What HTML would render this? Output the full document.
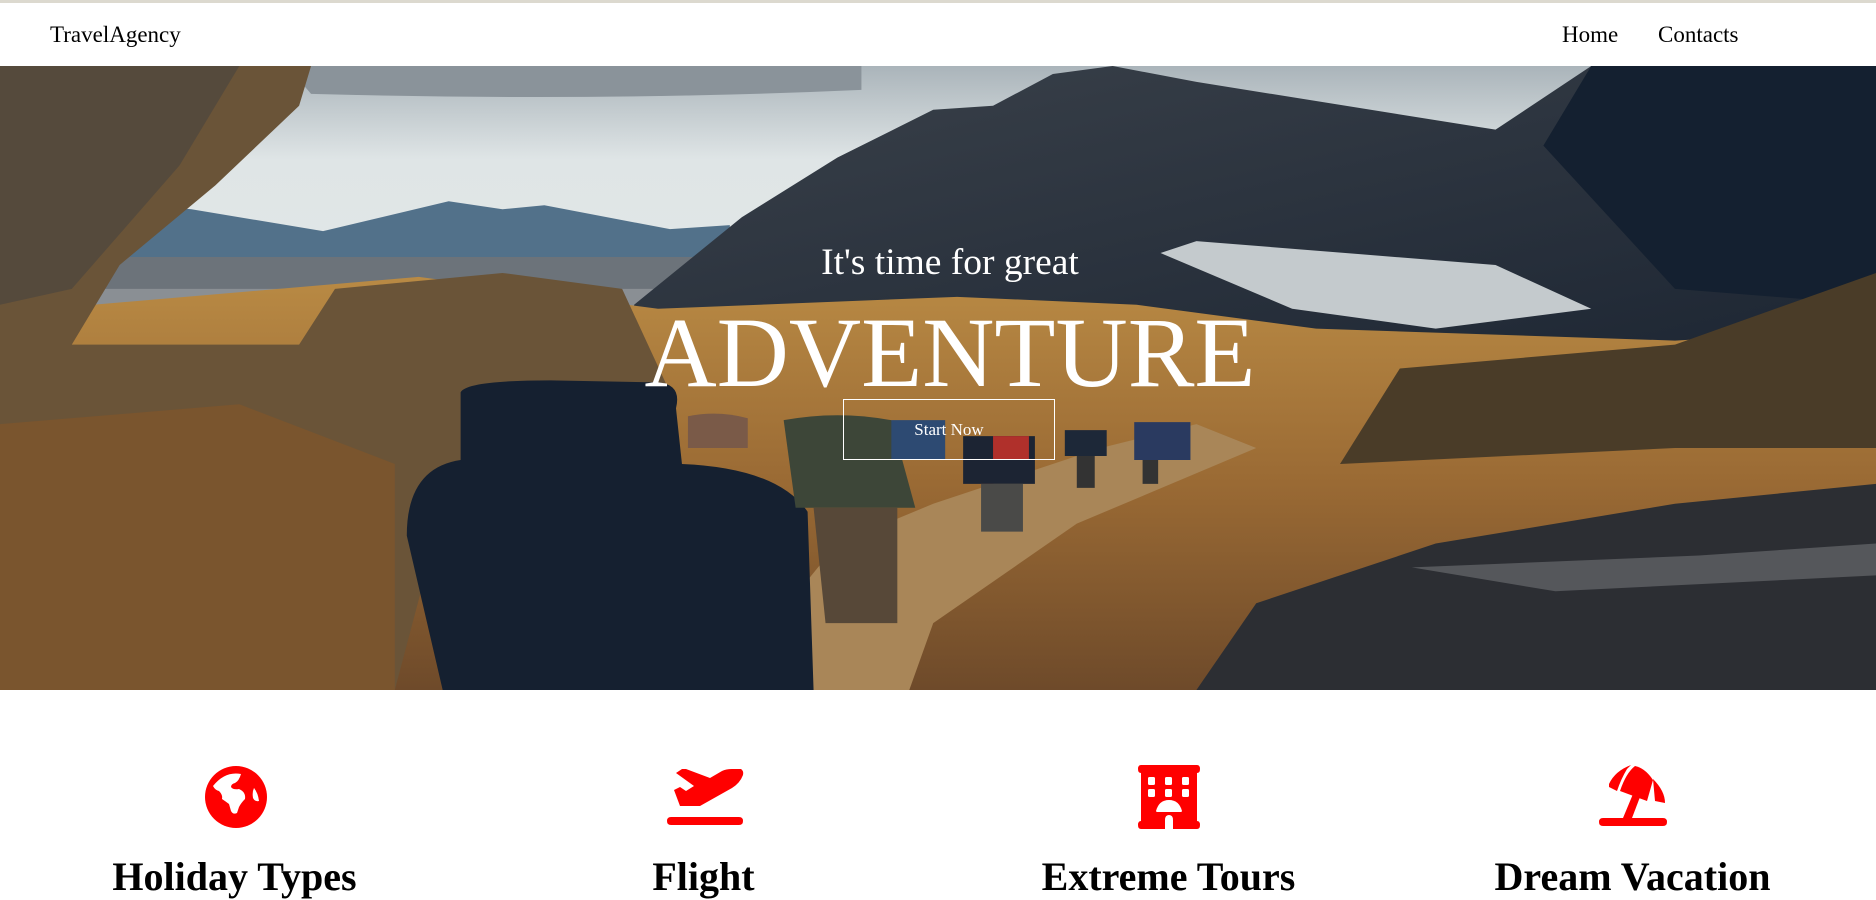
<!DOCTYPE html>
<html><head><meta charset="utf-8">
<style>
*{margin:0;padding:0;box-sizing:border-box}
html,body{width:1876px;height:898px;overflow:hidden;background:#fff;font-family:"Liberation Serif",serif}
.top{position:absolute;left:0;top:0;width:1876px;height:3px;background:#dcd9cf}
.nav{position:absolute;left:0;top:3px;width:1876px;height:63px;background:#fff}
.logo{position:absolute;left:50px;top:19px;font-size:23px;color:#000}
.links{position:absolute;top:19px;font-size:23px;color:#000}
.hero{position:absolute;left:0;top:66px;width:1876px;height:624px;overflow:hidden}
.hero svg{position:absolute;left:0;top:0}
.t1{position:absolute;left:12px;width:1876px;text-align:center;top:175px;font-size:37.5px;color:#fff}
.t2{position:absolute;left:12px;width:1876px;text-align:center;top:227px;font-size:100px;color:#fff;line-height:1.2}
.btn{position:absolute;left:843px;top:333px;width:212px;height:61px;border:1px solid #fff;color:#fff;font-size:17px;text-align:center;line-height:59px}
.col{position:absolute;top:765px;width:469px;text-align:center}
.col svg{display:block;margin:0 auto}
.col h2{position:absolute;top:89px;left:0;width:469px;font-size:40px;font-weight:bold;line-height:46px;white-space:nowrap}
</style></head><body>
<div class="top"></div>
<div class="nav">
<div class="logo">TravelAgency</div>
<div class="links" style="left:1562px">Home</div>
<div class="links" style="left:1658px">Contacts</div>
</div>
<div class="hero">
<svg width="1876" height="624" viewBox="0 0 1568 1568" preserveAspectRatio="none">
<defs>
<linearGradient id="sky" x1="0" y1="0" x2="0" y2="1"><stop offset="0" stop-color="#aab4ba"/><stop offset=".15" stop-color="#dfe5e6"/><stop offset="1" stop-color="#e8ecec"/></linearGradient>
<linearGradient id="gold" x1="0" y1="0" x2="0" y2="1"><stop offset="0" stop-color="#b98a44"/><stop offset=".5" stop-color="#9a6a34"/><stop offset="1" stop-color="#6e4a2a"/></linearGradient>
<linearGradient id="mt" x1="0" y1="0" x2="1" y2="1"><stop offset="0" stop-color="#3a414a"/><stop offset="1" stop-color="#1d2633"/></linearGradient>
</defs>
<rect width="1568" height="1568" fill="url(#sky)"/>
<path d="M240 0H720V60Q500 90 260 70Z" fill="#8a939a"/>
<path d="M60 480L110 345L160 360L270 415L375 340L420 360L455 350L560 410L610 400L610 520L60 520Z" fill="#52718a"/>
<path d="M50 480H610V820H50Z" fill="#6c737a"/>
<path d="M50 560H600V620H50Z" fill="#8a8f94"/>
<path d="M530 600L620 380L700 230L780 110L830 100L880 20L930 0L1000 40L1250 160L1330 0L1568 0L1568 720L530 720Z" fill="url(#mt)"/>
<path d="M1330 0L1568 0L1568 600L1400 560L1290 200Z" fill="#142030"/>
<path d="M970 470L1000 440L1250 500L1330 610L1200 660L1080 610Z" fill="#c4cacd"/>
<path d="M0 620L350 530L550 610L800 580L950 600L1100 660L1400 690L1568 660L1568 1568L0 1568Z" fill="url(#gold)"/>
<path d="M0 0L260 0L250 100L180 300L100 500L60 700L250 700L280 560L420 520L520 560L560 820L380 1000L330 1568L0 1568Z" fill="#6a5438"/>
<path d="M0 0L200 0L150 250L60 560L0 600Z" fill="#554a3c"/>
<path d="M0 900L200 850L330 1000L330 1568L0 1568Z" fill="#7a552e"/>
<path d="M1120 1000L1170 760L1400 700L1568 520L1568 960L1400 960Z" fill="#4a3c28"/>
<path d="M600 1568L700 1200L780 1100L920 960L1000 900L1050 960L900 1150L780 1400L760 1568Z" fill="#a98658"/>
<path d="M1000 1568L1050 1350L1200 1200L1400 1100L1568 1050L1568 1568Z" fill="#2c2e33"/>
<path d="M1180 1260L1420 1230L1568 1200L1568 1280L1300 1320Z" fill="#55575b"/>
<path d="M385 820Q390 790 460 790L550 795Q570 800 565 860L570 1000Q650 1010 675 1120L680 1568L370 1568L340 1180Q340 1010 385 990Z" fill="#152030"/>
<path d="M575 880Q600 865 625 885L625 960L575 960Z" fill="#7a5a48"/>
<path d="M655 890Q700 865 745 890L765 1110L665 1110Z" fill="#3d4638"/>
<path d="M680 1110H750V1400H690Z" fill="#574838"/>
<path d="M805 930H865V1050H805Z" fill="#1c2433"/>
<path d="M820 1050H855V1170H820Z" fill="#4a4a48"/>
<path d="M830 930H860V990H830Z" fill="#b0302b"/>
<path d="M890 915H925V980H890Z" fill="#1d2838"/>
<path d="M900 980H915V1060H900Z" fill="#333"/>
<path d="M948 895H995V990H948Z" fill="#2a3a60"/>
<path d="M955 990H968V1050H955Z" fill="#333"/>
<path d="M745 890H790V990H745Z" fill="#2d4a72"/>
</svg>
<div class="t1">It's time for great</div>
<div class="t2">ADVENTURE</div>
<div class="btn">Start Now</div>
</div>

<div class="col" style="left:0">
<svg width="64" height="64" viewBox="0 0 64 64"><circle cx="33" cy="32" r="31" fill="#f00"/>
<path d="M10 21Q22 6 38 9Q36 16 32 18Q28 19 28 22Q30 25 36 24Q43 27 42 34Q38 38 36 42L34 48Q30 50 28 46L26 39Q22 36 19 34Q20 30 16 26Q12 25 10 21Z" fill="#fff"/>
<path d="M51 23Q55 28 56 36Q52 37 50 33Q49 27 51 23Z" fill="#fff"/></svg>
<h2>Holiday Types</h2></div>

<div class="col" style="left:469px">
<svg width="80" height="64" viewBox="0 0 80 64"><path d="M3 56Q3 52 7 52H75Q79 52 79 56Q79 60 75 60H7Q3 60 3 56Z" fill="#f00"/>
<path d="M10 25L16 22L22 26L30 21L12 8L18 4L22 4L46 13L58 6Q62 4 68 4L77 4Q80 6 79 10Q76 18 68 23L36 41H16Z" fill="#f00"/></svg>
<h2>Flight</h2></div>

<div class="col" style="left:934px">
<svg width="64" height="64" viewBox="0 0 64 64"><path d="M4 0H60Q63 0 63 4Q63 8 60 8V56Q63 56 63 60Q63 64 60 64H36V55Q36 50 32 50Q28 50 28 55V64H4Q1 64 1 60Q1 56 4 56V8Q1 8 1 4Q1 0 4 0Z" fill="#f00"/>
<g fill="#fff"><rect x="11" y="12" width="7" height="8" rx="1.5"/><rect x="28" y="12" width="7" height="8" rx="1.5"/><rect x="45" y="12" width="7" height="8" rx="1.5"/><rect x="11" y="24" width="7" height="8" rx="1.5"/><rect x="28" y="24" width="7" height="8" rx="1.5"/><rect x="45" y="24" width="7" height="8" rx="1.5"/><path d="M19 46Q22 35 32 35Q42 35 45 46Q45 47 43 47H21Q19 47 19 46Z"/></g></svg>
<h2>Extreme Tours</h2></div>

<div class="col" style="left:1398px">
<svg width="76" height="64" viewBox="0 0 76 64"><path d="M4 57Q4 53 8 53H68Q72 53 72 57Q72 61 68 61H8Q4 61 4 57Z" fill="#f00"/>
<path d="M28 53L38 29L45 32L37 53Z" fill="#f00"/>
<path d="M14 19Q20 6 36 0L32 4Q26 14 22 26L14 22Z" fill="#f00"/>
<path d="M25 26Q31 8 40 1Q50 3 58 15L52 36Z" fill="#f00"/>
<path d="M58 14Q70 26 70 38L60 36Z" fill="#f00"/></svg>
<h2>Dream Vacation</h2></div>
</body></html>
